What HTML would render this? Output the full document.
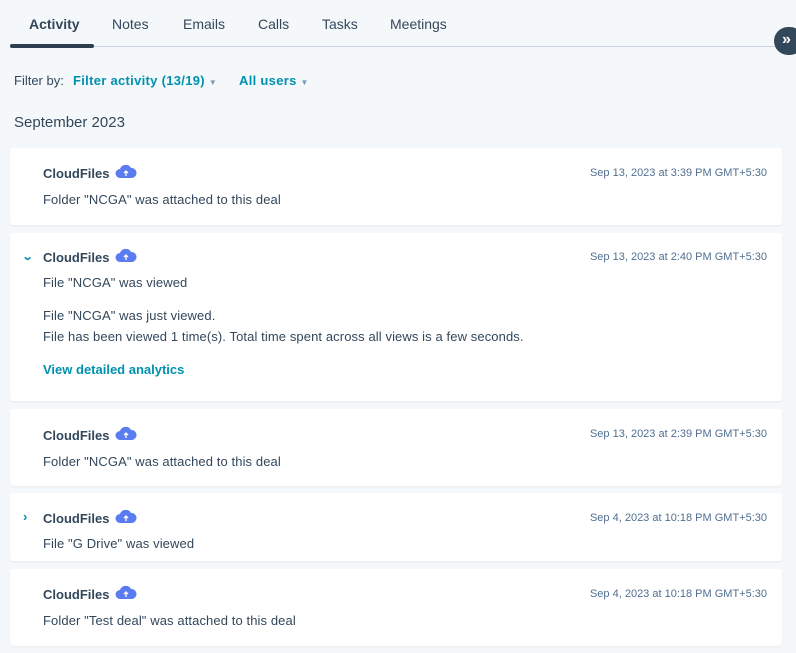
<!DOCTYPE html>
<html><head><style>
*{margin:0;padding:0;box-sizing:border-box}
body{width:796px;height:653px;background:#f5f8fa;font-family:"Liberation Sans",sans-serif;color:#33475b;position:relative;overflow:hidden}
.a{position:absolute;white-space:nowrap}
.tab{top:16px;font-size:14px;color:#33475b}
.card{position:absolute;left:10px;width:772px;background:#fff;border-radius:3px;box-shadow:0 1px 2px rgba(0,0,0,.06)}
.t{position:absolute;left:33px;font-size:13px;font-weight:bold;color:#33475b}
.d{position:absolute;right:15px;font-size:11px;color:#516f90}
.b{position:absolute;left:33px;font-size:13px;color:#33475b;letter-spacing:0.1px}
.ic{position:absolute;left:105px}
</style></head><body>
<div class="a tab" style="left:29px;font-weight:bold">Activity</div>
<div class="a tab" style="left:112px">Notes</div>
<div class="a tab" style="left:183px">Emails</div>
<div class="a tab" style="left:258px">Calls</div>
<div class="a tab" style="left:322px">Tasks</div>
<div class="a tab" style="left:390px">Meetings</div>
<div class="a" style="left:10px;top:46px;width:775px;height:1px;background:#cbd6e2"></div>
<div class="a" style="left:10px;top:44px;width:84px;height:4px;border-radius:2px;background:#2d3e50"></div>
<div class="a" style="left:774px;top:27px;width:30px;height:28px;border-radius:14px;background:#33475b;color:#fff;font-size:16px;font-weight:bold;line-height:26px;padding-left:8px">»</div>
<div class="a" style="left:14px;top:73px;font-size:13px">Filter by:</div>
<div class="a" style="left:73px;top:73px;font-size:13px;font-weight:bold;color:#0091ae;letter-spacing:0.3px">Filter activity (13/19) <span style="font-size:8px;color:#7c98b6">▼</span></div>
<div class="a" style="left:239px;top:73px;font-size:13px;font-weight:bold;color:#0091ae;letter-spacing:0.3px">All users <span style="font-size:8px;color:#7c98b6">▼</span></div>
<div class="a" style="left:14px;top:114px;font-size:15px">September 2023</div>

<svg width="0" height="0" style="position:absolute"><defs><g id="cl"><path d="M5 15a4.5 4.5 0 0 1 0-9a6 6 0 0 1 11-1a4.5 4.5 0 0 1 1 10z" fill="#5b7cf0"/><path d="M11 13V8M9 10l2-2 2 2" stroke="#fff" stroke-width="1.3" fill="none"/></g></defs></svg>

<div class="card" style="top:148px;height:77px">
<div class="t" style="top:18px">CloudFiles</div><svg class="ic" style="top:15px" width="22" height="16"><use href="#cl"/></svg>
<div class="d" style="top:19px">Sep 13, 2023 at 3:39 PM GMT+5:30</div>
<div class="b" style="top:44px">Folder "NCGA" was attached to this deal</div></div>

<div class="card" style="top:233px;height:168px">
<div class="a" style="left:13px;top:17px;font-size:11px;color:#0091ae;font-weight:bold;transform:scaleX(1.3)">⌄</div>
<div class="t" style="top:17px">CloudFiles</div><svg class="ic" style="top:14px" width="22" height="16"><use href="#cl"/></svg>
<div class="d" style="top:18px">Sep 13, 2023 at 2:40 PM GMT+5:30</div>
<div class="b" style="top:42px">File "NCGA" was viewed</div>
<div class="b" style="top:75px">File "NCGA" was just viewed.</div>
<div class="b" style="top:96px">File has been viewed 1 time(s). Total time spent across all views is a few seconds.</div>
<div class="t" style="top:129px;color:#0091ae">View detailed analytics</div></div>

<div class="card" style="top:409px;height:77px">
<div class="t" style="top:19px">CloudFiles</div><svg class="ic" style="top:16px" width="22" height="16"><use href="#cl"/></svg>
<div class="d" style="top:19px">Sep 13, 2023 at 2:39 PM GMT+5:30</div>
<div class="b" style="top:45px">Folder "NCGA" was attached to this deal</div></div>

<div class="card" style="top:493px;height:68px">
<div class="a" style="left:13px;top:16px;font-size:13px;color:#0091ae;font-weight:bold">›</div>
<div class="t" style="top:18px">CloudFiles</div><svg class="ic" style="top:15px" width="22" height="16"><use href="#cl"/></svg>
<div class="d" style="top:19px">Sep 4, 2023 at 10:18 PM GMT+5:30</div>
<div class="b" style="top:43px">File "G Drive" was viewed</div></div>

<div class="card" style="top:569px;height:77px">
<div class="t" style="top:18px">CloudFiles</div><svg class="ic" style="top:15px" width="22" height="16"><use href="#cl"/></svg>
<div class="d" style="top:19px">Sep 4, 2023 at 10:18 PM GMT+5:30</div>
<div class="b" style="top:44px">Folder "Test deal" was attached to this deal</div></div>
</body></html>
